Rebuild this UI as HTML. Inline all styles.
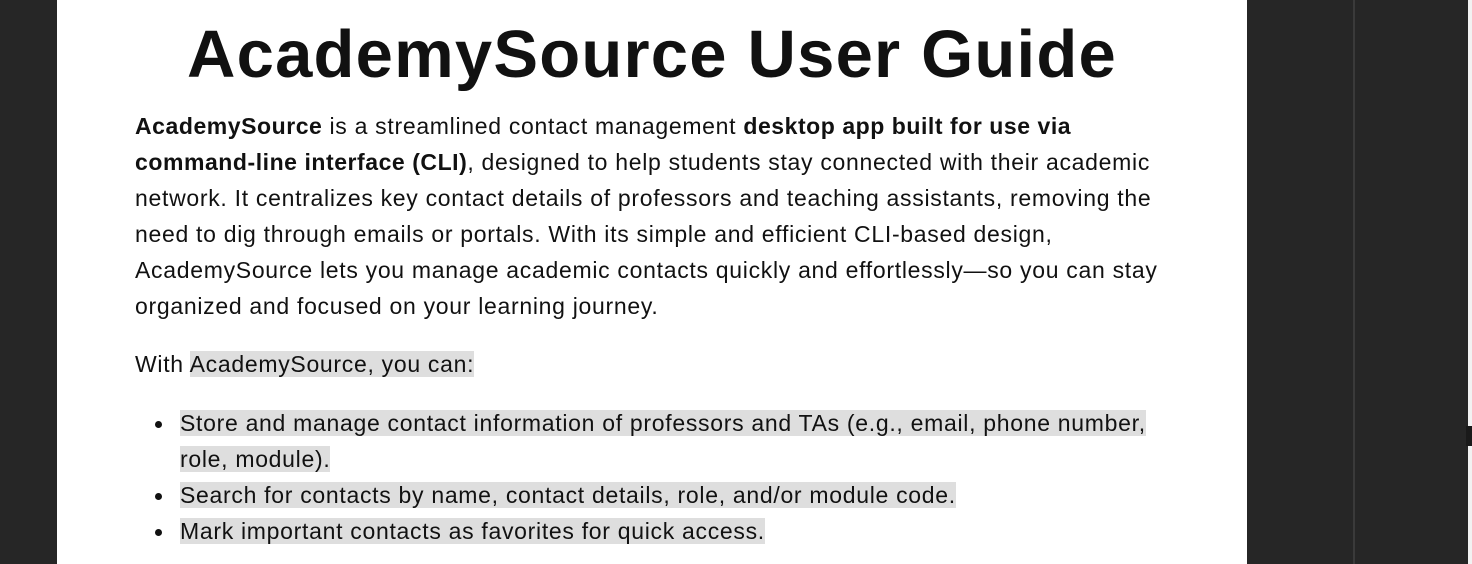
<!DOCTYPE html>
<html><head><meta charset="utf-8"><style>
html,body{margin:0;padding:0;width:1472px;height:564px;overflow:hidden;background:#262626;}
.page{position:absolute;left:57px;top:0;width:1190px;height:564px;background:#fff;}
.rp{position:absolute;left:1353px;top:0;width:2px;height:564px;background:#3a3a3a;}
.edge{position:absolute;left:1468px;top:0;width:4px;height:564px;background:#f2f2f2;}
.notch{position:absolute;left:1466px;top:426px;width:6px;height:20px;background:#1a1a1a;}
.c{position:absolute;left:78px;top:0;font-family:"Liberation Sans",Arial,sans-serif;color:#111;white-space:nowrap;}
h1{position:absolute;left:0;width:1190px;top:16px;margin:0;text-align:center;font-size:67px;font-weight:bold;letter-spacing:1.2px;color:#111;font-family:"Liberation Sans",Arial,sans-serif;white-space:nowrap;}
.p{position:absolute;font-size:23px;line-height:36px;letter-spacing:0.7px;}
b{font-weight:bold;letter-spacing:0.55px;}
.hl{background:#dedede;}
ul{margin:0;padding:0;list-style:none;}
li{position:relative;}
li:before{content:"";position:absolute;left:-25px;top:16px;width:7px;height:7px;border-radius:50%;background:#111;}
</style></head><body>
<div class="page">
<h1>AcademySource User Guide</h1>
<div class="c">
<div class="p" style="top:108px;"><b>AcademySource</b> is a streamlined contact management <b>desktop app built for use via</b><br><b>command-line interface (CLI)</b>, designed to help students stay connected with their academic<br>network. It centralizes key contact details of professors and teaching assistants, removing the<br>need to dig through emails or portals. With its simple and efficient CLI-based design,<br>AcademySource lets you manage academic contacts quickly and effortlessly—so you can stay<br>organized and focused on your learning journey.</div>
<div class="p" style="top:346px;">With <span class="hl">AcademySource, you can:</span></div>
<ul class="p" style="top:405px;left:45px;">
<li><span class="hl">Store and manage contact information of professors and TAs (e.g., email, phone number,</span><br><span class="hl">role, module).</span></li>
<li><span class="hl">Search for contacts by name, contact details, role, and/or module code.</span></li>
<li><span class="hl">Mark important contacts as favorites for quick access.</span></li>
</ul>
</div>
</div>
<div class="rp"></div>
<div class="edge"></div>
<div class="notch"></div>
</body></html>
